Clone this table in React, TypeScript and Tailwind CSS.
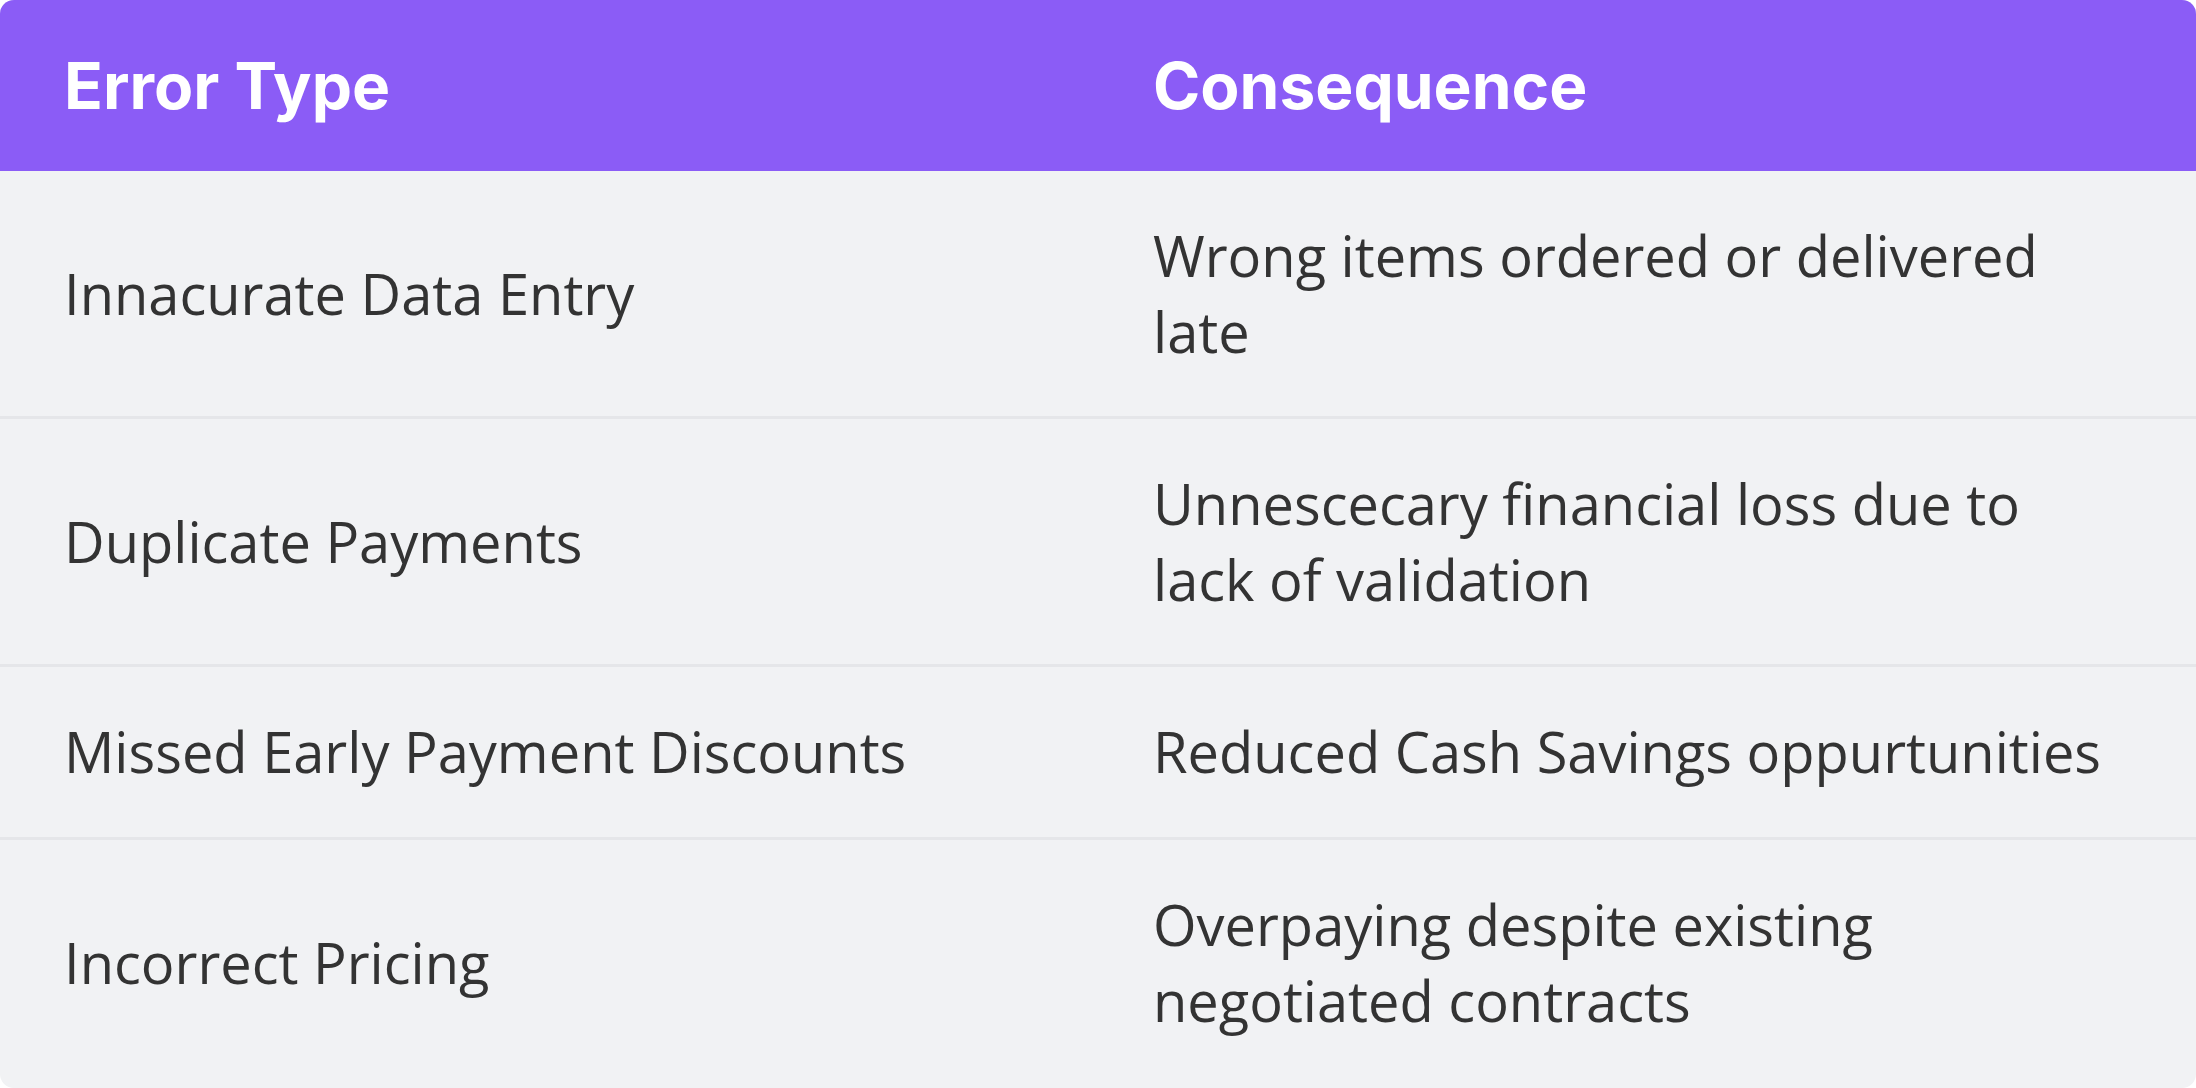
const ROWS = [
  ["Innacurate Data Entry", "Wrong items ordered or delivered late"],
  ["Duplicate Payments", "Unnescecary financial loss due to lack of validation"],
  ["Missed Early Payment Discounts", "Reduced Cash Savings oppurtunities"],
  ["Incorrect Pricing", "Overpaying despite existing negotiated contracts"],
];

export default function App() {
  return (
    <div className="w-[2196px] h-[1088px] bg-white">
      <div className="h-full rounded-[14px] overflow-hidden bg-[#f1f2f4]">
        {/* Header */}
        <div className="grid grid-cols-[1089px_1fr] bg-[#8b5cf6] text-white font-bold text-[64px] leading-[75px] font-['Inter',sans-serif]">
          <div className="pl-[64px] py-[48px]">Error Type</div>
          <div className="pl-[64px] pr-[64px] py-[48px]">Consequence</div>
        </div>

        {/* Body */}
        {ROWS.map(([type, consequence], i) => (
          <div
            key={type}
            className={
              "grid grid-cols-[1089px_1fr] items-center text-[#333333] text-[56px] leading-[75.6px] font-['Open_Sans',sans-serif] " +
              (i < ROWS.length - 1 ? "border-b-[3px] border-[#e5e6e9]" : "")
            }
          >
            <div className="pl-[64px] py-[47px]">{type}</div>
            <div className="pl-[64px] pr-[64px] py-[47px]">{consequence}</div>
          </div>
        ))}
      </div>
    </div>
  );
}
